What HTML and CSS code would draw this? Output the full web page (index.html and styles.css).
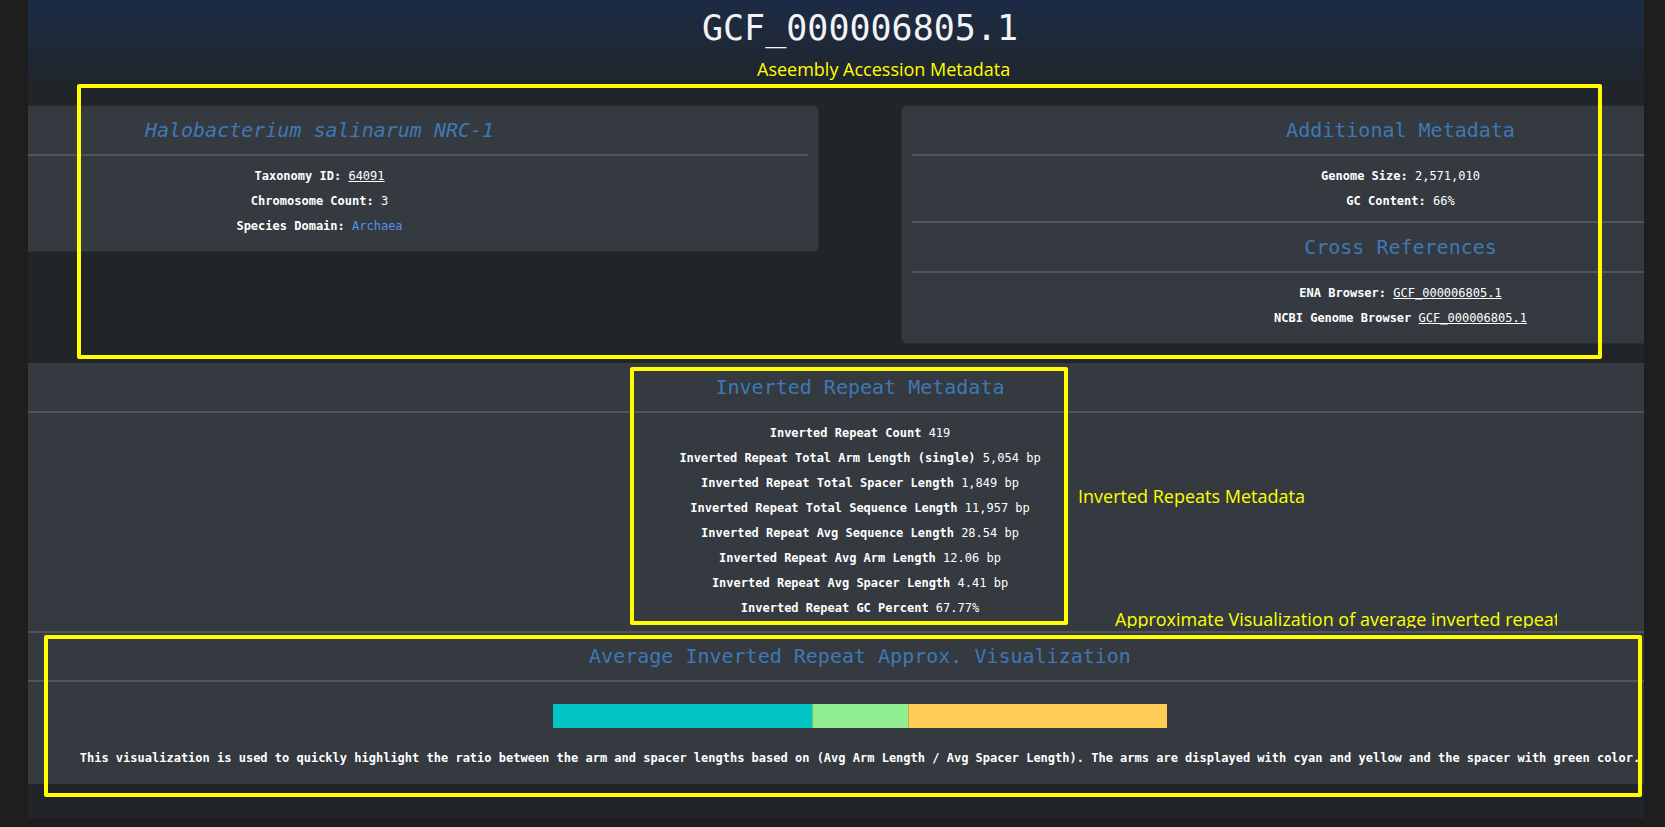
FILE: index.html
```html
<!DOCTYPE html>
<html lang="en">
<head>
<meta charset="utf-8">
<title>GCF_000006805.1</title>
<link rel="stylesheet" href="styles.css">
</head>
<body>
<div class="page">
  <div class="inner">
    <h1 class="title">GCF_000006805.1</h1>

    <div class="cards">
      <section class="card">
        <h4 class="heading italic">Halobacterium salinarum NRC-1</h4>
        <hr class="rule inset">
        <div class="body">
          <p class="line"><b>Taxonomy ID:</b> <a class="link" href="#">64091</a></p>
          <p class="line"><b>Chromosome Count:</b> 3</p>
          <p class="line"><b>Species Domain:</b> <span class="domain">Archaea</span></p>
        </div>
      </section>

      <section class="card">
        <h4 class="heading">Additional Metadata</h4>
        <hr class="rule inset">
        <div class="body">
          <p class="line"><b>Genome Size:</b> 2,571,010</p>
          <p class="line"><b>GC Content:</b> 66%</p>
        </div>
        <hr class="rule inset">
        <h4 class="heading">Cross References</h4>
        <hr class="rule inset">
        <div class="body">
          <p class="line"><b>ENA Browser:</b> <a class="link" href="#">GCF_000006805.1</a></p>
          <p class="line"><b>NCBI Genome Browser</b> <a class="link" href="#">GCF_000006805.1</a></p>
        </div>
      </section>
    </div>

    <section class="panel">
      <h4 class="heading">Inverted Repeat Metadata</h4>
      <hr class="rule">
      <div class="body wide">
        <p class="line"><b>Inverted Repeat Count</b> 419</p>
        <p class="line"><b>Inverted Repeat Total Arm Length (single)</b> 5,054 bp</p>
        <p class="line"><b>Inverted Repeat Total Spacer Length</b> 1,849 bp</p>
        <p class="line"><b>Inverted Repeat Total Sequence Length</b> 11,957 bp</p>
        <p class="line"><b>Inverted Repeat Avg Sequence Length</b> 28.54 bp</p>
        <p class="line"><b>Inverted Repeat Avg Arm Length</b> 12.06 bp</p>
        <p class="line"><b>Inverted Repeat Avg Spacer Length</b> 4.41 bp</p>
        <p class="line"><b>Inverted Repeat GC Percent</b> 67.77%</p>
      </div>
    </section>

    <section class="panel viz">
      <h4 class="heading tight">Average Inverted Repeat Approx. Visualization</h4>
      <hr class="rule">
      <div class="bar">
        <div class="seg arm-left" style="flex-basis:42.27%"></div>
        <div class="seg spacer" style="flex-basis:15.46%"></div>
        <div class="seg arm-right" style="flex-basis:42.27%"></div>
      </div>
      <p class="note">This visualization is used to quickly highlight the ratio between the arm and spacer lengths based on (Avg Arm Length / Avg Spacer Length). The arms are displayed with cyan and yellow and the spacer with green color.</p>
    </section>
  </div>
</div>

<div class="annot-box box-accession"></div>
<div class="annot-box box-repeats"></div>
<div class="annot-box box-viz"></div>
<div class="annot-label label-accession">Aseembly Accession Metadata</div>
<div class="annot-label label-repeats">Inverted Repeats Metadata</div>
<div class="annot-label label-viz">Approximate Visualization of average inverted repeat</div>
</body>
</html>
```

FILE: styles.css
```css
* { box-sizing: border-box; }

body {
  margin: 0;
  background: #1e1e1e;
  font-family: "DejaVu Sans Mono", "Liberation Mono", monospace;
  color: #ffffff;
}

.page {
  margin-left: 28px;
  width: 1616px;
  height: 818px;
  overflow: hidden;
  background: linear-gradient(180deg, #1c2b45 0px, #212529 92px);
}

.inner {
  width: 2080px;
  margin-left: -208px;
}

.title {
  margin: 4px 0 0;
  font-size: 35px;
  line-height: 48px;
  font-weight: 400;
  text-align: center;
  color: #f1f3f5;
}

.cards {
  display: flex;
  gap: 82px;
  align-items: flex-start;
  margin-top: 53px;
}

.card {
  flex: 1 1 0;
  background: #343a40;
  border: 1px solid rgba(0, 0, 0, 0.2);
  border-radius: 6px;
  padding-bottom: 5px;
}

.heading {
  margin: 0;
  font-size: 20px;
  line-height: 48px;
  font-weight: 400;
  color: #3f78b4;
  text-align: center;
  white-space: nowrap;
}

.heading.tight { line-height: 47px; }
.heading.italic { font-style: italic; }

.rule {
  border: 0;
  border-top: 2px solid #50555a;
  margin: 0;
}

.rule.inset { margin: 0 10px; }

.body {
  padding: 8px 10px 7px;
  text-align: center;
}

.body.wide { padding: 8px 0 10px; }

.line {
  margin: 0;
  font-size: 12px;
  line-height: 25px;
  white-space: nowrap;
}

.line b { font-weight: 700; }

.link {
  color: #ffffff;
  text-decoration: underline;
}

.domain { color: #5a8fe8; }

.panel {
  background: #343a40;
  margin-top: 19px;
}

.panel.viz {
  margin-top: 0;
  border-top: 2px solid #50555a;
  padding-bottom: 13px;
}

.bar {
  display: flex;
  width: 615px;
  height: 24px;
  margin: 22px auto 0;
}

.seg { flex-grow: 0; flex-shrink: 0; }
.arm-left { background: #03c4c4; }
.spacer { background: #90ee90; border-left: 1px solid #6fc07a; }
.arm-right { background: #ffcd56; border-left: 1px solid #c9ad5a; }

.note {
  margin: 18px 0 0;
  font-size: 12px;
  line-height: 25px;
  font-weight: 700;
  text-align: center;
  white-space: nowrap;
}

/* annotation overlay */
.annot-box {
  position: absolute;
  border: 4px solid #ffff00;
  border-radius: 2px;
}

.box-accession { left: 77px; top: 84px; width: 1525px; height: 275px; }
.box-repeats { left: 630px; top: 367px; width: 438px; height: 258px; }
.box-viz { left: 44px; top: 635px; width: 1598px; height: 162px; }

.annot-label {
  position: absolute;
  font-family: "Open Sans", "Liberation Sans", sans-serif;
  font-size: 18px;
  line-height: 1;
  color: #ffff00;
  white-space: nowrap;
}

.label-accession { left: 757px; top: 60px; }
.label-repeats { left: 1078px; top: 487px; }
.label-viz { left: 1115px; top: 610px; width: 442px; overflow: hidden; }
```
